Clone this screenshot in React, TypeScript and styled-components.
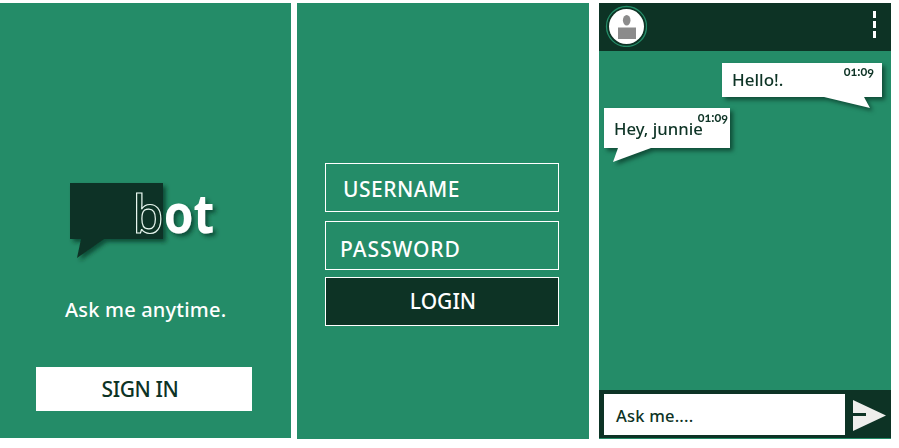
import React from 'react';
import styled, { createGlobalStyle } from 'styled-components';

const green = '#248c68';
const dark = '#0d3325';

const GlobalStyle = createGlobalStyle`
  * { box-sizing: border-box; }
  body { margin: 0; background: #fff; font-family: 'Noto Sans', 'Open Sans', sans-serif; }
`;

const Page = styled.main`
  display: flex;
  align-items: flex-start;
  width: 899px;
  height: 448px;
  padding-top: 3px;
  overflow: hidden;
`;

const Screen = styled.section<{ $width?: number; $height?: number; $gap?: number }>`
  display: flex;
  flex: none;
  flex-direction: column;
  width: ${p => p.$width ?? 292}px;
  height: ${p => p.$height ?? 436}px;
  margin-right: ${p => p.$gap ?? 0}px;
  background: ${green};
`;

const Label = styled.span<{ $size: number; $spacing?: number; $weight?: number }>`
  font-size: ${p => p.$size}px;
  font-weight: ${p => p.$weight ?? 500};
  line-height: 24px;
  letter-spacing: ${p => p.$spacing ?? 0}px;
  white-space: pre;
`;

const Logo = styled.svg`
  display: block;
  width: 180px;
  height: 100px;
  margin: 167px 0 0 50px;
  font-family: 'Noto Sans', sans-serif;
`;

const Tagline = styled.p`
  height: 24px;
  margin: 28px 0 0 65px;
  color: #fff;
  line-height: 24px;
`;

const SignIn = styled.button`
  width: 216px;
  height: 44px;
  margin: 45px 0 0 36px;
  padding: 0 8px 0 0;
  border: 0;
  background: #fff;
  color: ${dark};
  font-family: inherit;
`;

const Form = styled.form`
  display: flex;
  flex-direction: column;
  width: 234px;
  margin: 160px 0 0 28px;
`;

const Field = styled.div<{ $indent: number; $drop: number }>`
  height: 49px;
  margin-bottom: 9px;
  padding: ${p => p.$drop}px 0 0 ${p => p.$indent}px;
  border: 1px solid #fff;
  color: #fff;
  line-height: 24px;
`;

const Login = styled.button`
  height: 49px;
  margin-top: -2px;
  padding: 0 0 2px 2px;
  border: 1px solid #fff;
  background: ${dark};
  color: #fff;
  font-family: inherit;
`;

const TopBar = styled.header`
  display: flex;
  justify-content: space-between;
  height: 48px;
  padding: 2px 15px 0 6px;
  background: ${dark};
`;

const Dots = styled.div`
  display: flex;
  flex-direction: column;
  gap: 3px;
  padding-top: 6px;
`;

const Dot = styled.i`
  width: 3px;
  height: 7px;
  background: #fff;
`;

const Messages = styled.div`
  display: flex;
  flex: 1;
  flex-direction: column;
  align-items: flex-start;
`;

const Bubble = styled.div<{ $mine?: boolean }>`
  position: relative;
  display: flex;
  width: ${p => (p.$mine ? 160 : 126)}px;
  height: ${p => (p.$mine ? 34 : 40)}px;
  margin: ${p => (p.$mine ? '12px 0 0 123px' : '11px 0 0 5px')};
  padding: ${p => (p.$mine ? '5px 0 0 10px' : '9px 0 0 10px')};
  background: #fff;
  color: ${dark};
  filter: drop-shadow(3px 3px 2px rgba(5, 45, 30, 0.65));
`;

const Tail = styled.svg<{ $left: number; $top: number }>`
  position: absolute;
  left: ${p => p.$left}px;
  top: ${p => p.$top}px;
  fill: #fff;
`;

const Time = styled.time<{ $top: number; $right: number }>`
  position: absolute;
  top: ${p => p.$top}px;
  right: ${p => p.$right}px;
  font-family: Lato, sans-serif;
  font-size: 12.5px;
  font-weight: 700;
  font-variant-numeric: oldstyle-nums;
  line-height: 14px;
`;

const Composer = styled.footer`
  display: flex;
  height: 48px;
  margin-bottom: 1px;
  padding: 4px 4px 3px 5px;
  background: ${dark};
`;

const Prompt = styled.div`
  width: 241px;
  height: 41px;
  padding: 10px 0 0 12px;
  background: #fff;
  color: ${dark};
`;

const Send = styled.svg`
  margin: 6px 0 0 8px;
  fill: #eeeeec;
`;

export default function App() {
  return (
    <>
      <GlobalStyle />
      <Page>
        <Screen $width={291} $height={435} $gap={6}>
          <Logo viewBox="0 0 180 100">
            <defs>
              <filter id="shade" x="-20%" y="-20%" width="150%" height="150%">
                <feDropShadow dx="3" dy="3" stdDeviation="2.3" floodColor="#062b1e" floodOpacity="0.65" />
              </filter>
            </defs>
            <path d="M20 13H113V69H54L27 88L31 69H20Z" fill={dark} filter="url(#shade)" />
            <text x="82.5" y="62.5" fontSize="52" fontWeight="500" textLength="31" lengthAdjust="spacingAndGlyphs" fill={dark} stroke="#e8f7f0" strokeWidth="1.2">b</text>
            <text x="113.7" y="63" fontSize="54" fontWeight="700" textLength="50.5" lengthAdjust="spacingAndGlyphs" fill="#fff" filter="url(#shade)">ot</text>
          </Logo>
          <Tagline><Label $size={20} $spacing={0.2}>Ask me anytime.</Label></Tagline>
          <SignIn><Label $size={21} $spacing={-0.4}>SIGN IN</Label></SignIn>
        </Screen>

        <Screen $gap={10}>
          <Form>
            <Field $indent={17} $drop={13}><Label $size={21} $spacing={0.5}>USERNAME</Label></Field>
            <Field $indent={14} $drop={15}><Label $size={21} $spacing={0.95}>PASSWORD</Label></Field>
            <Login type="button"><Label $size={21}>LOGIN</Label></Login>
          </Form>
        </Screen>

        <Screen>
          <TopBar>
            <svg width="42" height="42" viewBox="0 0 42 42">
              <circle cx="21.5" cy="21.5" r="20" fill="none" stroke={green} strokeWidth="1.3" />
              <circle cx="21.5" cy="21.5" r="17.5" fill="#fff" />
              <ellipse cx="21.7" cy="15.3" rx="3.8" ry="5.3" fill="#8b8b8b" />
              <path d="M13 22.5H31V34H13Z" fill="#8b8b8b" />
            </svg>
            <Dots><Dot /><Dot /><Dot /></Dots>
          </TopBar>
          <Messages>
            <Bubble $mine>
              <Label $size={17}>Hello!.</Label>
              <Time $top={2} $right={8}>01:09</Time>
              <Tail $left={102} $top={34} width="46" height="12"><path d="M0 0H40L46 11Z" /></Tail>
            </Bubble>
            <Bubble>
              <Label $size={16.7}>Hey, junnie</Label>
              <Time $top={3} $right={2}>01:09</Time>
              <Tail $left={9} $top={40} width="38" height="15"><path d="M5 0H38L0 14Z" /></Tail>
            </Bubble>
          </Messages>
          <Composer>
            <Prompt><Label $size={16.5} $spacing={0.2}>Ask me....</Label></Prompt>
            <Send width="34" height="31" viewBox="0 0 34 31"><path d="M0 0L33 15.5L0 31V16H13V13H0Z" /></Send>
          </Composer>
        </Screen>
      </Page>
    </>
  );
}
